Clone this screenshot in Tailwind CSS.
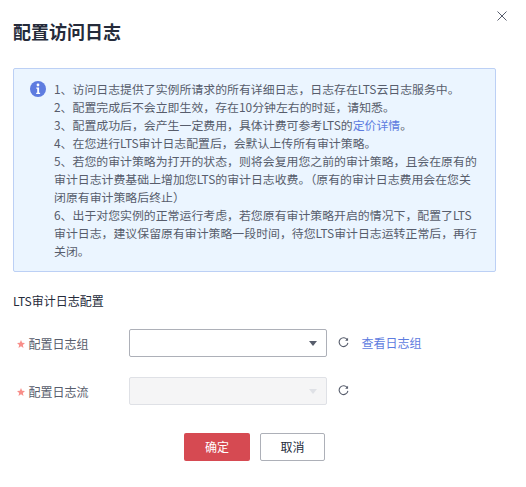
<!DOCTYPE html>
<html lang="zh">
<head>
    <meta charset="UTF-8">
    <meta name="viewport" content="width=device-width, initial-scale=1.0">
    <script src="https://cdn.jsdelivr.net/npm/@tailwindcss/browser@4"></script>
    <title>配置访问日志</title>
</head>
<body class="bg-white font-['Noto_Sans_CJK_SC',sans-serif] text-[12px] text-[#575d6c]">
    <div class="relative w-[526px] h-[487px] overflow-hidden pl-[13px] pt-[20px]">
        <button class="absolute left-[497px] top-[11px] text-[#575d6c]">
            <svg class="block" width="10" height="10" viewBox="0 0 10 10" fill="none" stroke="currentColor" stroke-width="1"><path d="M.5.5l9 9M9.500.5l-9 9"/></svg>
        </button>

        <h1 class="text-[18px] leading-[22px] font-bold text-[#252b3a]">配置访问日志</h1>

        <div class="mt-[26px] w-[483px] h-[204px] flex border border-[#bcd0f5] rounded-[2px] bg-[#ebf5ff] pl-[16px] pt-[11px]">
            <svg class="mt-[1px] shrink-0" width="16" height="16" viewBox="0 0 16 16">
                <circle cx="8" cy="8" r="8" fill="#5e7ce0"/>
                <circle cx="8" cy="4" r="1.4" fill="#fff"/>
                <path d="M6.300 6.500h2.800v5.300h1v1.200H6.200v-1.200h1V7.700h-.9z" fill="#fff"/>
            </svg>
            <div class="ml-[8px] w-[430px] text-[11.9px] leading-[18px] whitespace-nowrap">
                <p>1、访问日志提供了实例所请求的所有详细日志，日志存在LTS云日志服务中。</p>
                <p>2、配置完成后不会立即生效，存在10分钟左右的时延，请知悉。</p>
                <p>3、配置成功后，会产生一定费用，具体计费可参考LTS的<a class="text-[#5e7ce0]">定价详情</a>。</p>
                <p>4、在您进行LTS审计日志配置后，会默认上传所有审计策略。</p>
                <p>5、若您的审计策略为打开的状态，则将会复用您之前的审计策略，且会在原有的<br>审计日志计费基础上增加您LTS的审计日志收费。（原有的审计日志费用会在您关<br>闭原有审计策略后终止）</p>
                <p>6、出于对您实例的正常运行考虑，若您原有审计策略开启的情况下，配置了LTS<br>审计日志，建议保留原有审计策略一段时间，待您LTS审计日志运转正常后，再行<br>关闭。</p>
            </div>
        </div>

        <div class="mt-[20px] leading-[18px] text-[#252b3a]">LTS审计日志配置</div>

        <div class="mt-[19px] flex items-center h-[28px]">
            <span class="w-[115.500px] pl-[4px] pt-[1px] flex items-center">
                <svg class="mr-[3.500px]" width="8" height="8" viewBox="0 0 24 24"><path d="M12 0l3.500 8.300 8.500.7-6.500 5.800 2 9.200L12 19l-7.500 5 2-9.200L0 9l8.500-.7z" fill="#f88f8a"/></svg>配置日志组
            </span>
            <div class="w-[198px] h-[28px] border border-[#adb0b8] rounded-[2px] bg-white flex items-center justify-end pr-[9px]">
                <svg width="8" height="5" viewBox="0 0 8 5"><path d="M0 0h8L4 5z" fill="#575d6c"/></svg>
            </div>
            <svg class="ml-[11px] -mt-[1px]" width="11" height="11" viewBox="0 0 12 12" fill="none" stroke="#575d6c" stroke-width="1.200"><path d="M10.200 3.200A4.800 4.800 0 1 0 10.800 6.500"/><path d="M11 .8v3.200H7.800z" fill="#575d6c" stroke="none"/></svg>
            <a class="ml-[13px] -mt-[1px] text-[#5e7ce0]">查看日志组</a>
        </div>

        <div class="mt-[20px] flex items-center h-[28px]">
            <span class="w-[115.500px] pl-[4px] pt-[1px] flex items-center">
                <svg class="mr-[3.500px]" width="8" height="8" viewBox="0 0 24 24"><path d="M12 0l3.500 8.300 8.500.7-6.500 5.800 2 9.200L12 19l-7.500 5 2-9.200L0 9l8.500-.7z" fill="#f88f8a"/></svg>配置日志流
            </span>
            <div class="w-[198px] h-[28px] border border-[#dfe1e6] rounded-[2px] bg-[#f5f5f6] flex items-center justify-end pr-[9px]">
                <svg width="8" height="5" viewBox="0 0 8 5"><path d="M0 0h8L4 5z" fill="#dfe1e6"/></svg>
            </div>
            <svg class="ml-[11px] -mt-[1px]" width="11" height="11" viewBox="0 0 12 12" fill="none" stroke="#575d6c" stroke-width="1.200"><path d="M10.200 3.200A4.800 4.800 0 1 0 10.800 6.500"/><path d="M11 .8v3.200H7.800z" fill="#575d6c" stroke="none"/></svg>
        </div>

        <div class="mt-[28px] ml-[171px] flex gap-[10px]">
            <button class="w-[66px] h-[28px] rounded-[2px] bg-[#d64a52] text-white">确定</button>
            <button class="w-[65px] h-[28px] rounded-[2px] border border-[#adb0b8] bg-white text-[#252b3a]">取消</button>
        </div>
    </div>
</body>
</html>
